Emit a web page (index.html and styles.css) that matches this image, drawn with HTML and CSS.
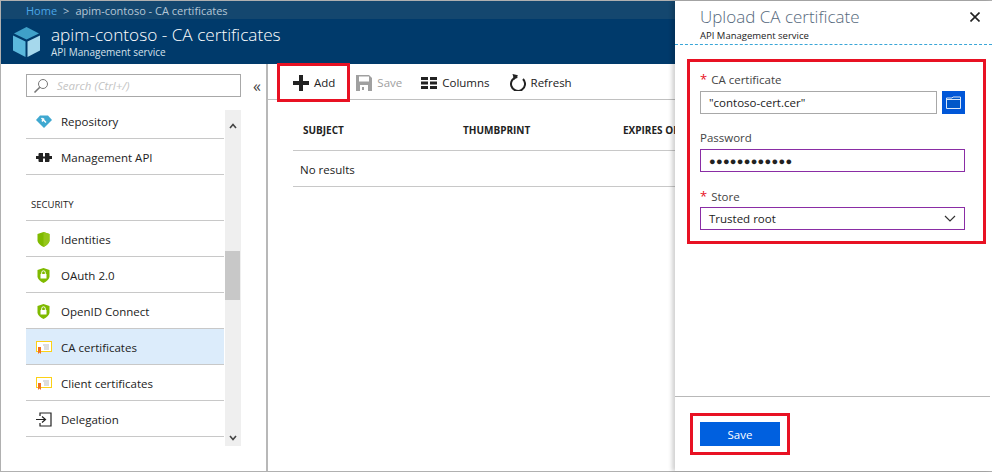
FILE: index.html
```html
<!DOCTYPE html>
<html lang="en">
<head>
  <meta charset="UTF-8">
  <title>apim-contoso - CA certificates</title>
  <link rel="stylesheet" href="styles.css">
</head>
<body>
  <div class="page">
    <div class="main">
      <div class="crumbs">
        <span class="crumb-home">Home</span>
        <span class="crumb-sep">&gt;</span>
        <span>apim-contoso - CA certificates</span>
      </div>
      <div class="header">
        <svg class="header-icon" width="27" height="30" viewBox="0 0 27 30">
          <polygon points="13.5,0 26,6.5 13.5,12.5 1,6.5" fill="#3fa0c8"/>
          <polygon points="0,8.5 12.5,14.5 12.5,30 0,23.5" fill="#5bb8dc"/>
          <polygon points="14.5,14.5 27,8.5 27,23.5 14.5,30" fill="#a6d8ec"/>
        </svg>
        <div>
          <div class="header-title">apim-contoso - CA certificates</div>
          <div class="header-sub">API Management service</div>
        </div>
      </div>
      <div class="body">
        <div class="sidebar">
          <div class="search-row">
            <div class="search">
              <svg width="16" height="16" viewBox="0 0 16 16" fill="none" stroke="#777" stroke-width="1">
                <circle cx="10" cy="6" r="4.5"/>
                <path d="M6.8 9.2 L1.5 14.5" stroke-width="1.6"/>
              </svg>
              <span>Search (Ctrl+/)</span>
            </div>
            <span class="collapse">«</span>
          </div>
          <div class="menu-wrap">
            <div class="menu">
              <div class="menu-item short">
                <svg class="menu-icon" width="16" height="13" viewBox="0 0 16 13">
                  <path d="M4 0.5 H12 L16 5 L8 13 L0 5 Z" fill="#3fa8d0"/>
                  <path d="M5.5 3 L10 7.5 M8 3.5 L6 6.5" stroke="#fff" stroke-width="1.5"/>
                </svg>
                <span>Repository</span>
              </div>
              <div class="menu-item">
                <svg class="menu-icon" width="16" height="9" viewBox="0 0 16 9">
                  <path d="M0 3 H2.5 V1 Q2.5 0 3.5 0 H7 V9 H3.5 Q2.5 9 2.5 8 V6 H0 Z M9 0 H12.5 Q13.5 0 13.5 1 V3 H16 V6 H13.5 V8 Q13.5 9 12.5 9 H9 Z M7 3.5 H9 V5.5 H7 Z" fill="#222"/>
                </svg>
                <span>Management API</span>
              </div>
              <div class="menu-section">SECURITY</div>
              <div class="menu-item">
                <svg class="menu-icon shield" width="13" height="15" viewBox="0 0 12 15">
                  <path d="M6 0 L12 2 V9 Q11 12.5 6 15 Q1 12.5 0 9 V2 Z" fill="#7fba00"/>
                  <path d="M6 0 L12 2 V9 Q11 12.5 6 15 Z" fill="#95c61a"/>
                </svg>
                <span>Identities</span>
              </div>
              <div class="menu-item">
                <svg class="menu-icon shield" width="13" height="15" viewBox="0 0 12 15">
                  <path d="M6 0 L12 2 V9 Q11 12.5 6 15 Q1 12.5 0 9 V2 Z" fill="#7fba00"/>
                  <rect x="3" y="6" width="6" height="4.5" fill="#fff"/>
                  <path d="M4.2 6 V4.6 A1.8 1.8 0 0 1 7.8 4.6 V6" fill="none" stroke="#fff"/>
                </svg>
                <span>OAuth 2.0</span>
              </div>
              <div class="menu-item">
                <svg class="menu-icon shield" width="13" height="15" viewBox="0 0 12 15">
                  <path d="M6 0 L12 2 V9 Q11 12.5 6 15 Q1 12.5 0 9 V2 Z" fill="#7fba00"/>
                  <rect x="3" y="6" width="6" height="4.5" fill="#fff"/>
                  <path d="M4.2 6 V4.6 A1.8 1.8 0 0 1 7.8 4.6 V6" fill="none" stroke="#fff"/>
                </svg>
                <span>OpenID Connect</span>
              </div>
              <div class="menu-item active">
                <svg class="menu-icon" width="16" height="13" viewBox="0 0 16 13">
                  <rect x="0.5" y="0.5" width="15" height="10" fill="#fff" stroke="#fcd116"/>
                  <path d="M7 4 H13 M8 6 H13 M8 8 H13" stroke="#bbb"/>
                  <path d="M2 6 H5 V13 L3.5 11.5 L2 13 Z" fill="#f2701f"/>
                </svg>
                <span>CA certificates</span>
              </div>
              <div class="menu-item">
                <svg class="menu-icon" width="16" height="13" viewBox="0 0 16 13">
                  <rect x="0.5" y="0.5" width="15" height="10" fill="#fff" stroke="#fcd116"/>
                  <path d="M7 4 H13 M8 6 H13 M8 8 H13" stroke="#bbb"/>
                  <path d="M2 6 H5 V13 L3.5 11.5 L2 13 Z" fill="#f2701f"/>
                </svg>
                <span>Client certificates</span>
              </div>
              <div class="menu-item">
                <svg class="menu-icon" width="16" height="15" viewBox="0 0 16 15" fill="none" stroke="#222" stroke-width="1.2">
                  <path d="M4 4 V1 H15 V14 H4 V11"/>
                  <path d="M0 7.5 H9 M6 4.5 L9.5 7.5 L6 10.5"/>
                </svg>
                <span>Delegation</span>
              </div>
            </div>
            <div class="scrollbar">
              <span class="scroll-arrow">
                <svg width="8" height="6" viewBox="0 0 8 6" fill="none" stroke="#444" stroke-width="1.6"><path d="M1 5 L4 1.5 L7 5"/></svg>
              </span>
              <div class="scroll-thumb"></div>
              <span class="scroll-arrow bottom">
                <svg width="8" height="6" viewBox="0 0 8 6" fill="none" stroke="#444" stroke-width="1.6"><path d="M1 1 L4 4.5 L7 1"/></svg>
              </span>
            </div>
          </div>
        </div>
        <div class="content">
          <div class="toolbar">
            <div class="tool">
              <svg width="16" height="16" viewBox="0 0 16 16"><path d="M6 0 H10 V6 H16 V10 H10 V16 H6 V10 H0 V6 H6 Z" fill="#222"/></svg>
              <span>Add</span>
            </div>
            <div class="tool disabled">
              <svg width="16" height="16" viewBox="0 0 16 16">
                <path d="M0 0 H13 L16 3 V16 H0 Z" fill="#a0a0a0"/>
                <rect x="3" y="1.5" width="10" height="5" fill="#fff"/>
                <rect x="4" y="10" width="8" height="6" fill="#fff"/>
                <rect x="6" y="12" width="2" height="3" fill="#a0a0a0"/>
              </svg>
              <span>Save</span>
            </div>
            <div class="tool">
              <svg width="16" height="12" viewBox="0 0 16 12" fill="#222">
                <rect y="0" width="7" height="3"/><rect x="9" y="0" width="7" height="3"/>
                <rect y="4.5" width="7" height="3"/><rect x="9" y="4.5" width="7" height="3"/>
                <rect y="9" width="7" height="3"/><rect x="9" y="9" width="7" height="3"/>
              </svg>
              <span>Columns</span>
            </div>
            <div class="tool">
              <svg width="16" height="17" viewBox="0 0 16 17" fill="none">
                <path d="M5 3.6 A7 7 0 1 0 11 3.6" stroke="#222" stroke-width="2" transform="rotate(20 8 10)"/>
                <path d="M2.5 0 L8 1.2 L4.2 6 Z" fill="#222"/>
              </svg>
              <span>Refresh</span>
            </div>
          </div>
          <div class="table-head">
            <span class="col-subject">SUBJECT</span>
            <span class="col-thumb">THUMBPRINT</span>
            <span class="col-exp">EXPIRES ON</span>
          </div>
          <div class="table-empty">No results</div>
        </div>
      </div>
      <div class="mark mark-add"></div>
    </div>
    <div class="panel">
      <div class="panel-head">
        <div class="panel-title-row">
          <div class="panel-title">Upload CA certificate</div>
          <svg class="panel-close" width="10" height="10" viewBox="0 0 10 10" stroke="#222" stroke-width="1.6"><path d="M0.5 0.5 L9.5 9.5 M9.5 0.5 L0.5 9.5"/></svg>
        </div>
        <div class="panel-sub">API Management service</div>
      </div>
      <div class="panel-form">
        <div class="mark mark-form"></div>
        <div class="field-label"><span class="req">*</span>CA certificate</div>
        <div class="file-row">
          <div class="input file-input">"contoso-cert.cer"</div>
          <div class="file-btn">
            <svg width="15" height="13" viewBox="0 0 15 13">
              <path d="M0.5 2 H6 L7 1 H14.5 V12.5 H0.5 Z" fill="#0057c8" stroke="#d8e6f8"/>
              <path d="M1 3.5 H14" stroke="#d8e6f8"/>
            </svg>
          </div>
        </div>
        <div class="field-label plain">Password</div>
        <div class="input picked dots">●●●●●●●●●●●●</div>
        <div class="field-label"><span class="req">*</span>Store</div>
        <div class="input picked select">
          <span>Trusted root</span>
          <svg width="12" height="7" viewBox="0 0 12 7" fill="none" stroke="#333" stroke-width="1.2"><path d="M1 1 L6 6 L11 1"/></svg>
        </div>
      </div>
      <div class="panel-foot">
        <div class="mark mark-save"></div>
        <div class="save-btn">Save</div>
      </div>
    </div>
  </div>
</body>
</html>
```
FILE: styles.css
```css
html, body {
  margin: 0;
  height: 100%;
  overflow: hidden;
}

body {
  font-family: "Open Sans", "Noto Sans", sans-serif;
  font-size: 11.5px;
  color: #222;
  background: #fff;
}

.page {
  display: flex;
  height: 472px;
  box-sizing: border-box;
  border-left: 1px solid #b0b0b0;
  border-top: 1px solid #b0b0b0;
  border-bottom: 1px solid #b0b0b0;
}

.main {
  position: relative;
  flex: 1;
  display: flex;
  flex-direction: column;
  min-width: 0;
}

.crumbs {
  height: 18px;
  display: flex;
  align-items: center;
  gap: 6px;
  padding-left: 25px;
  background: #14476f;
  color: #b4c6d6;
  font-size: 11px;
}

.crumb-home {
  color: #4aa6e8;
}

.header {
  height: 45px;
  display: flex;
  align-items: center;
  gap: 11px;
  padding-left: 12px;
  background: #003a6b;
  color: #fff;
}

.header-title {
  font-size: 17.2px;
  line-height: 21px;
  font-weight: 300;
}

.header-sub {
  font-size: 10px;
  line-height: 13px;
  margin-top: 1px;
  color: #d5e0ea;
}

.body {
  flex: 1;
  display: flex;
  min-height: 0;
}

.sidebar {
  width: 240px;
  flex: none;
  border-right: 2px solid #b8b8b8;
  padding: 10px 0 0 25px;
}

.search-row {
  display: flex;
  align-items: center;
}

.search {
  width: 215px;
  height: 23px;
  box-sizing: border-box;
  border: 1px solid #a8a8a8;
  display: flex;
  align-items: center;
  gap: 8px;
  padding-left: 6px;
  color: #c4c4c4;
  font-style: italic;
  flex: none;
}

.collapse {
  margin-left: 12px;
  font-size: 16px;
  line-height: 20px;
  color: #444;
}

.menu-wrap {
  display: flex;
  width: 215px;
  margin-top: 13px;
}

.menu {
  width: 198px;
}

.menu-item {
  height: 33px;
  padding-top: 2px;
  display: flex;
  align-items: center;
  border-bottom: 1px solid #c8c8c8;
}

.menu-item.short {
  height: 22px;
  padding: 0 0 6px;
}

.menu-item.active {
  background: #dcecfb;
}

.menu-item svg {
  flex: none;
}

.menu-icon {
  margin-left: 10px;
  margin-right: 9px;
}

.menu-icon.shield {
  margin-left: 11px;
  margin-right: 11px;
}

.menu-section {
  height: 46px;
  box-sizing: border-box;
  padding-top: 23px;
  border-bottom: 1px solid #c8c8c8;
  padding-left: 5px;
  font-size: 9.5px;
}

.scrollbar {
  margin-left: 1px;
  width: 16px;
  height: 336px;
  background: #efefef;
  position: relative;
}

.scroll-arrow {
  display: flex;
  justify-content: center;
  padding-top: 13px;
}

.scroll-arrow.bottom {
  position: absolute;
  left: 0;
  right: 0;
  bottom: 5px;
}

.scroll-thumb {
  position: absolute;
  top: 141px;
  left: 0;
  width: 15px;
  height: 49px;
  background: #c8c8c8;
}

.content {
  flex: 1;
  min-width: 0;
  overflow: hidden;
}

.toolbar {
  height: 33px;
  padding: 2px 0 0 25px;
  display: flex;
  align-items: center;
  gap: 19px;
  border-bottom: 1px solid #c0c0c0;
}

.tool {
  display: flex;
  align-items: center;
  gap: 5px;
}

.tool:first-child {
  margin-right: 2px;
}

.tool:last-child {
  margin-left: 1px;
}

.tool.disabled {
  color: #a0a0a0;
}

.table-head {
  margin-left: 25px;
  height: 41px;
  padding-top: 9px;
  display: flex;
  align-items: center;
  border-bottom: 1px solid #c8c8c8;
  font-size: 10px;
  font-weight: 700;
  white-space: nowrap;
}

.table-head span {
  flex: none;
}

.col-subject {
  width: 170px;
  padding-left: 10px;
  box-sizing: border-box;
}

.col-thumb {
  width: 160px;
}

.table-empty {
  margin-left: 25px;
  height: 33px;
  padding: 2px 0 0 7px;
  display: flex;
  align-items: center;
  border-bottom: 1px solid #c8c8c8;
}

.panel {
  width: 317px;
  flex: none;
  display: flex;
  flex-direction: column;
  background: #fff;
  box-shadow: -3px 0 4px rgba(0, 0, 0, 0.18);
  position: relative;
}

.panel-head {
  height: 44px;
  box-sizing: border-box;
  padding: 5px 12px 0 25px;
  border-bottom: 1px dashed #3aa6d8;
}

.panel-title-row {
  display: flex;
  justify-content: space-between;
  align-items: center;
}

.panel-title {
  font-size: 17px;
  line-height: 21px;
  font-weight: 300;
  color: #56697c;
}

.panel-sub {
  font-size: 9.5px;
  line-height: 13px;
  margin-top: 2px;
}

.panel-form {
  position: relative;
  flex: 1;
  padding: 26px 27px 0 25px;
}

.field-label {
  height: 16px;
  line-height: 16px;
  color: #444;
}

.field-label.plain {
  margin-top: 16px;
}

.req {
  color: #e81123;
  font-size: 13px;
  margin-right: 4px;
}

.file-row {
  display: flex;
  gap: 5px;
  margin-top: 4px;
}

.input {
  height: 23px;
  box-sizing: border-box;
  border: 1px solid #a8a8a8;
  display: flex;
  align-items: center;
  padding-left: 8px;
  margin-top: 3px;
}

.file-input {
  flex: 1;
  margin-top: 0;
}

.file-btn {
  width: 23px;
  height: 23px;
  background: #0057d8;
  display: flex;
  align-items: center;
  justify-content: center;
}

.picked {
  border-color: #8a2da5;
}

.dots {
  font-size: 11px;
  letter-spacing: 0.3px;
  margin-bottom: 16px;
}

.select {
  justify-content: space-between;
  padding-right: 8px;
}

.panel-foot {
  position: relative;
  height: 75px;
  margin-right: 2px;
  border-top: 1px solid #b8b8b8;
  padding: 25px 0 0 25px;
  box-sizing: border-box;
}

.save-btn {
  width: 80px;
  height: 24px;
  background: #0060df;
  color: #fff;
  display: flex;
  align-items: center;
  justify-content: center;
}

/* red annotation boxes drawn over the shot */
.mark {
  position: absolute;
  border: 3px solid #e81123;
  box-sizing: border-box;
  pointer-events: none;
}

.mark-add {
  left: 276px;
  top: 62px;
  width: 73px;
  height: 39px;
}

.mark-form {
  left: 12px;
  top: 14px;
  width: 299px;
  height: 185px;
}

.mark-save {
  left: 15px;
  top: 16px;
  width: 100px;
  height: 42px;
}
```
